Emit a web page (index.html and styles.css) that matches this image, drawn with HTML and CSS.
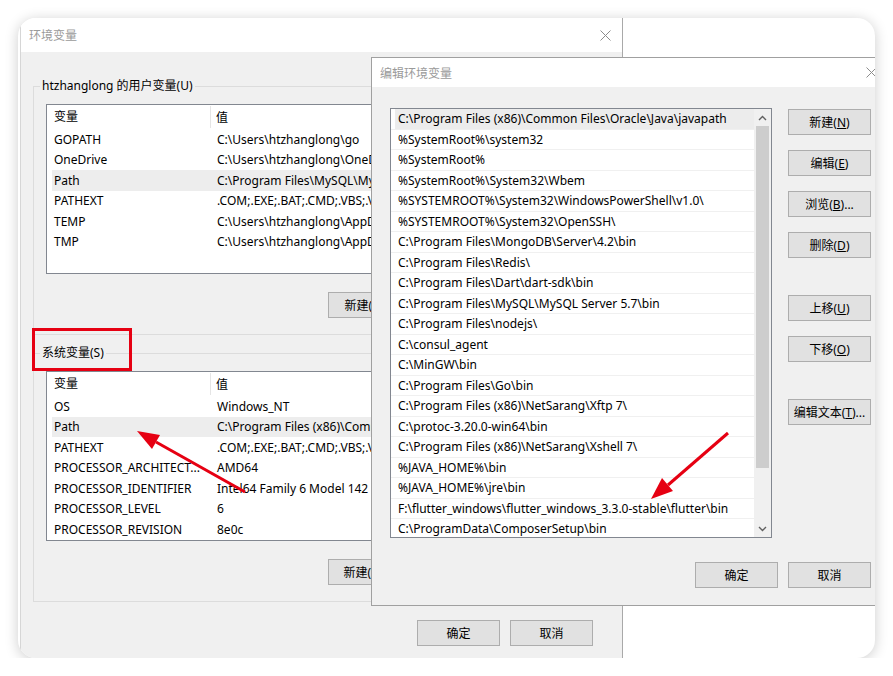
FILE: index.html
```html
<!DOCTYPE html>
<html lang="zh-CN">
<head>
    <meta charset="UTF-8">
    <meta name="viewport" content="width=device-width, initial-scale=1.0">
    <title>环境变量</title>
    <link rel="stylesheet" href="styles.css">
</head>
<body>
    <div class="card">

        <!-- ventana de atras: variables de entorno -->
        <div class="env-dialog">
            <div class="titlebar">
                <span class="title">环境变量</span>
                <svg class="close" width="11" height="11" viewBox="0 0 11 11"><path d="M0.5 0.5 L10.5 10.5 M10.5 0.5 L0.5 10.5" stroke="#8c8c8c" stroke-width="1" fill="none"/></svg>
            </div>
            <div class="dialog-body">
                <fieldset class="group">
                    <legend>htzhanglong 的用户变量(U)</legend>
                    <div class="var-list">
                        <div class="var-head"><span class="col-name">变量</span><span class="col-value">值</span></div>
                        <div class="var-row"><span class="col-name">GOPATH</span><span class="col-value">C:\Users\htzhanglong\go</span></div>
                        <div class="var-row"><span class="col-name">OneDrive</span><span class="col-value">C:\Users\htzhanglong\OneDrive</span></div>
                        <div class="var-row selected"><span class="col-name">Path</span><span class="col-value">C:\Program Files\MySQL\MySQL Server 5.7\bin;</span></div>
                        <div class="var-row"><span class="col-name">PATHEXT</span><span class="col-value">.COM;.EXE;.BAT;.CMD;.VBS;.VBE;.JS;.JSE</span></div>
                        <div class="var-row"><span class="col-name">TEMP</span><span class="col-value">C:\Users\htzhanglong\AppData\Local\Temp</span></div>
                        <div class="var-row"><span class="col-name">TMP</span><span class="col-value">C:\Users\htzhanglong\AppData\Local\Temp</span></div>
                    </div>
                    <div class="group-actions">
                        <button class="btn">新建(<u>N</u>)...</button>
                        <button class="btn">编辑(<u>E</u>)...</button>
                        <button class="btn">删除(<u>D</u>)</button>
                    </div>
                </fieldset>

                <fieldset class="group group-system">
                    <legend>系统变量(S)</legend>
                    <div class="var-list">
                        <div class="var-head"><span class="col-name">变量</span><span class="col-value">值</span></div>
                        <div class="var-row"><span class="col-name">OS</span><span class="col-value">Windows_NT</span></div>
                        <div class="var-row selected"><span class="col-name">Path</span><span class="col-value">C:\Program Files (x86)\Common Files\Oracle\Java\javapath;</span></div>
                        <div class="var-row"><span class="col-name">PATHEXT</span><span class="col-value">.COM;.EXE;.BAT;.CMD;.VBS;.VBE;.JS;.JSE</span></div>
                        <div class="var-row"><span class="col-name">PROCESSOR_ARCHITECT...</span><span class="col-value">AMD64</span></div>
                        <div class="var-row"><span class="col-name">PROCESSOR_IDENTIFIER</span><span class="col-value">Intel64 Family 6 Model 142 Stepping 12</span></div>
                        <div class="var-row"><span class="col-name">PROCESSOR_LEVEL</span><span class="col-value">6</span></div>
                        <div class="var-row"><span class="col-name">PROCESSOR_REVISION</span><span class="col-value">8e0c</span></div>
                    </div>
                    <div class="group-actions">
                        <button class="btn">新建(<u>W</u>)...</button>
                        <button class="btn">编辑(<u>I</u>)...</button>
                        <button class="btn">删除(<u>L</u>)</button>
                    </div>
                </fieldset>

                <div class="dialog-actions">
                    <button class="btn">确定</button>
                    <button class="btn">取消</button>
                </div>
            </div>
        </div>

        <!-- ventana de adelante: editar variable Path -->
        <div class="edit-dialog">
            <div class="titlebar titlebar-small">
                <span class="title">编辑环境变量</span>
                <svg class="close" width="11" height="11" viewBox="0 0 11 11"><path d="M0.5 0.5 L10.5 10.5 M10.5 0.5 L0.5 10.5" stroke="#8c8c8c" stroke-width="1" fill="none"/></svg>
            </div>
            <div class="edit-body">
                <div class="edit-main">
                    <div class="path-list">
                        <div class="path-rows">
                            <div class="path-row selected">C:\Program Files (x86)\Common Files\Oracle\Java\javapath</div>
                            <div class="path-row">%SystemRoot%\system32</div>
                            <div class="path-row">%SystemRoot%</div>
                            <div class="path-row">%SystemRoot%\System32\Wbem</div>
                            <div class="path-row">%SYSTEMROOT%\System32\WindowsPowerShell\v1.0\</div>
                            <div class="path-row">%SYSTEMROOT%\System32\OpenSSH\</div>
                            <div class="path-row">C:\Program Files\MongoDB\Server\4.2\bin</div>
                            <div class="path-row">C:\Program Files\Redis\</div>
                            <div class="path-row">C:\Program Files\Dart\dart-sdk\bin</div>
                            <div class="path-row">C:\Program Files\MySQL\MySQL Server 5.7\bin</div>
                            <div class="path-row">C:\Program Files\nodejs\</div>
                            <div class="path-row">C:\consul_agent</div>
                            <div class="path-row">C:\MinGW\bin</div>
                            <div class="path-row">C:\Program Files\Go\bin</div>
                            <div class="path-row">C:\Program Files (x86)\NetSarang\Xftp 7\</div>
                            <div class="path-row">C:\protoc-3.20.0-win64\bin</div>
                            <div class="path-row">C:\Program Files (x86)\NetSarang\Xshell 7\</div>
                            <div class="path-row">%JAVA_HOME%\bin</div>
                            <div class="path-row">%JAVA_HOME%\jre\bin</div>
                            <div class="path-row">F:\flutter_windows\flutter_windows_3.3.0-stable\flutter\bin</div>
                            <div class="path-row">C:\ProgramData\ComposerSetup\bin</div>
                        </div>
                        <div class="scrollbar">
                            <div class="scroll-btn"><svg width="9" height="6" viewBox="0 0 9 6"><path d="M1 5 L4.5 1.5 L8 5" stroke="#606060" stroke-width="1.4" fill="none"/></svg></div>
                            <div class="scroll-track"><div class="scroll-thumb"></div></div>
                            <div class="scroll-btn"><svg width="9" height="6" viewBox="0 0 9 6"><path d="M1 1 L4.5 4.5 L8 1" stroke="#606060" stroke-width="1.4" fill="none"/></svg></div>
                        </div>
                    </div>
                    <div class="side-actions">
                        <button class="btn">新建(<u>N</u>)</button>
                        <button class="btn">编辑(<u>E</u>)</button>
                        <button class="btn">浏览(<u>B</u>)...</button>
                        <button class="btn">删除(<u>D</u>)</button>
                        <button class="btn spaced">上移(<u>U</u>)</button>
                        <button class="btn">下移(<u>O</u>)</button>
                        <button class="btn spaced">编辑文本(<u>T</u>)...</button>
                    </div>
                </div>
                <div class="edit-actions">
                    <button class="btn">确定</button>
                    <button class="btn">取消</button>
                </div>
            </div>
        </div>

        <!-- marcas rojas -->
        <div class="mark-box"></div>
        <svg class="arrows" width="857" height="640" viewBox="0 0 857 640">
            <line x1="227" y1="474" x2="138" y2="424" stroke="#e60012" stroke-width="3"/>
            <polygon points="119,413 142,417 134,431" fill="#e60012"/>
            <line x1="710" y1="415" x2="650" y2="467" stroke="#e60012" stroke-width="3"/>
            <polygon points="633,481 655,473 644,460" fill="#e60012"/>
        </svg>
    </div>
</body>
</html>
```

FILE: styles.css
```css
* {
    box-sizing: border-box;
}

body {
    margin: 0;
    background-color: #ffffff;
    font-family: "Noto Sans", "Noto Sans CJK SC", sans-serif;
    font-size: 12px;
    color: #000000;
    overflow: hidden;
}

.card {
    position: relative;
    margin: 18px 0 0 18px;
    width: 857px;
    height: 640px;
    background-color: #ffffff;
    border-radius: 18px;
    overflow: hidden;
    box-shadow: 0 2px 14px rgba(0, 0, 0, 0.2);
}

/* ventana environment */

.env-dialog {
    margin-left: 2px;
    width: 603px;
    height: 640px;
    display: flex;
    flex-direction: column;
    border-left: 1px solid #d6d6d6;
    border-right: 1px solid #a9a9a9;
}

.titlebar {
    height: 34px;
    flex-shrink: 0;
    display: flex;
    align-items: center;
    justify-content: space-between;
    padding: 0 11px 0 8px;
    background-color: #ffffff;
}

.title {
    color: #9a9a9a;
    font-size: 12px;
}

.dialog-body {
    flex: 1;
    background-color: #f0f0f0;
    padding: 26px 12px 0 12px;
}

.group {
    margin: 0;
    padding: 10px 12px 16px 12px;
    border: 1px solid #dcdcdc;
    min-width: 0;
}

.group legend {
    margin-left: -6px;
    padding: 0 2px;
    line-height: 16px;
    font-size: 12px;
}

.group-system {
    margin-top: 10px;
}

.var-list {
    height: 170px;
    background-color: #ffffff;
    border: 1px solid #828790;
    overflow: hidden;
}

.var-head {
    height: 24px;
    display: flex;
    align-items: center;
    padding-left: 7px;
}

.var-head .col-name {
    width: 157px;
    height: 22px;
    line-height: 22px;
    border-right: 1px solid #e5e5e5;
}

.var-head .col-value {
    padding-left: 5px;
}

.var-row {
    height: 20.5px;
    display: flex;
    align-items: center;
    margin-left: 5px;
    padding-left: 2px;
    white-space: nowrap;
}

.var-row .col-name {
    width: 157px;
    flex-shrink: 0;
}

/* el resto del valor queda bajo la otra ventana */
.var-row .col-value {
    width: 160px;
    padding-left: 6px;
    overflow: hidden;
}

.var-row.selected {
    background-color: #ededed;
}

.group-actions {
    margin-top: 18px;
    display: flex;
    justify-content: flex-end;
    gap: 10px;
}

.btn {
    width: 83px;
    height: 26px;
    padding: 0;
    background-color: #e1e1e1;
    border: 1px solid #adadad;
    font-family: "Noto Sans", "Noto Sans CJK SC", sans-serif;
    font-size: 12px;
    color: #000000;
    white-space: nowrap;
}

.dialog-actions {
    margin-top: 18px;
    margin-right: 17px;
    display: flex;
    justify-content: flex-end;
    gap: 10px;
}

/* ventana editar */

.edit-dialog {
    position: absolute;
    left: 353px;
    top: 39px;
    width: 518px;
    height: 549px;
    display: flex;
    flex-direction: column;
    border: 1px solid #a0a0a0;
    background-color: #f0f0f0;
}

.titlebar-small {
    height: 29px;
    padding: 0 11px 0 8px;
}

.edit-body {
    padding: 21px 0 0 18px;
}

.edit-main {
    display: flex;
    gap: 16px;
}

.path-list {
    width: 382px;
    height: 430px;
    display: flex;
    background-color: #ffffff;
    border: 1px solid #828790;
    overflow: hidden;
}

.path-rows {
    flex: 1;
    overflow: hidden;
}

.path-row {
    height: 20.5px;
    line-height: 20.5px;
    padding-left: 7px;
    border-bottom: 1px solid #f0f0f0;
    white-space: nowrap;
}

.path-row.selected {
    background-color: #ececec;
    box-shadow: inset 4px 0 #ffffff;
}

.scrollbar {
    width: 17px;
    display: flex;
    flex-direction: column;
    background-color: #f0f0f0;
}

.scroll-btn {
    height: 17px;
    display: flex;
    align-items: center;
    justify-content: center;
}

.scroll-track {
    flex: 1;
}

.scroll-thumb {
    height: 342px;
    margin: 0 2px;
    background-color: #cdcdcd;
}

.side-actions {
    padding-top: 1px;
    display: flex;
    flex-direction: column;
    gap: 15px;
}

.side-actions .spaced {
    margin-top: 22px;
}

.edit-actions {
    width: 481px;
    margin-top: 24px;
    display: flex;
    justify-content: flex-end;
    gap: 10px;
}

/* marcas */

.mark-box {
    position: absolute;
    left: 14px;
    top: 310px;
    width: 100px;
    height: 43px;
    border: 3px solid #e60012;
}

.arrows {
    position: absolute;
    left: 0;
    top: 0;
    pointer-events: none;
}
```
